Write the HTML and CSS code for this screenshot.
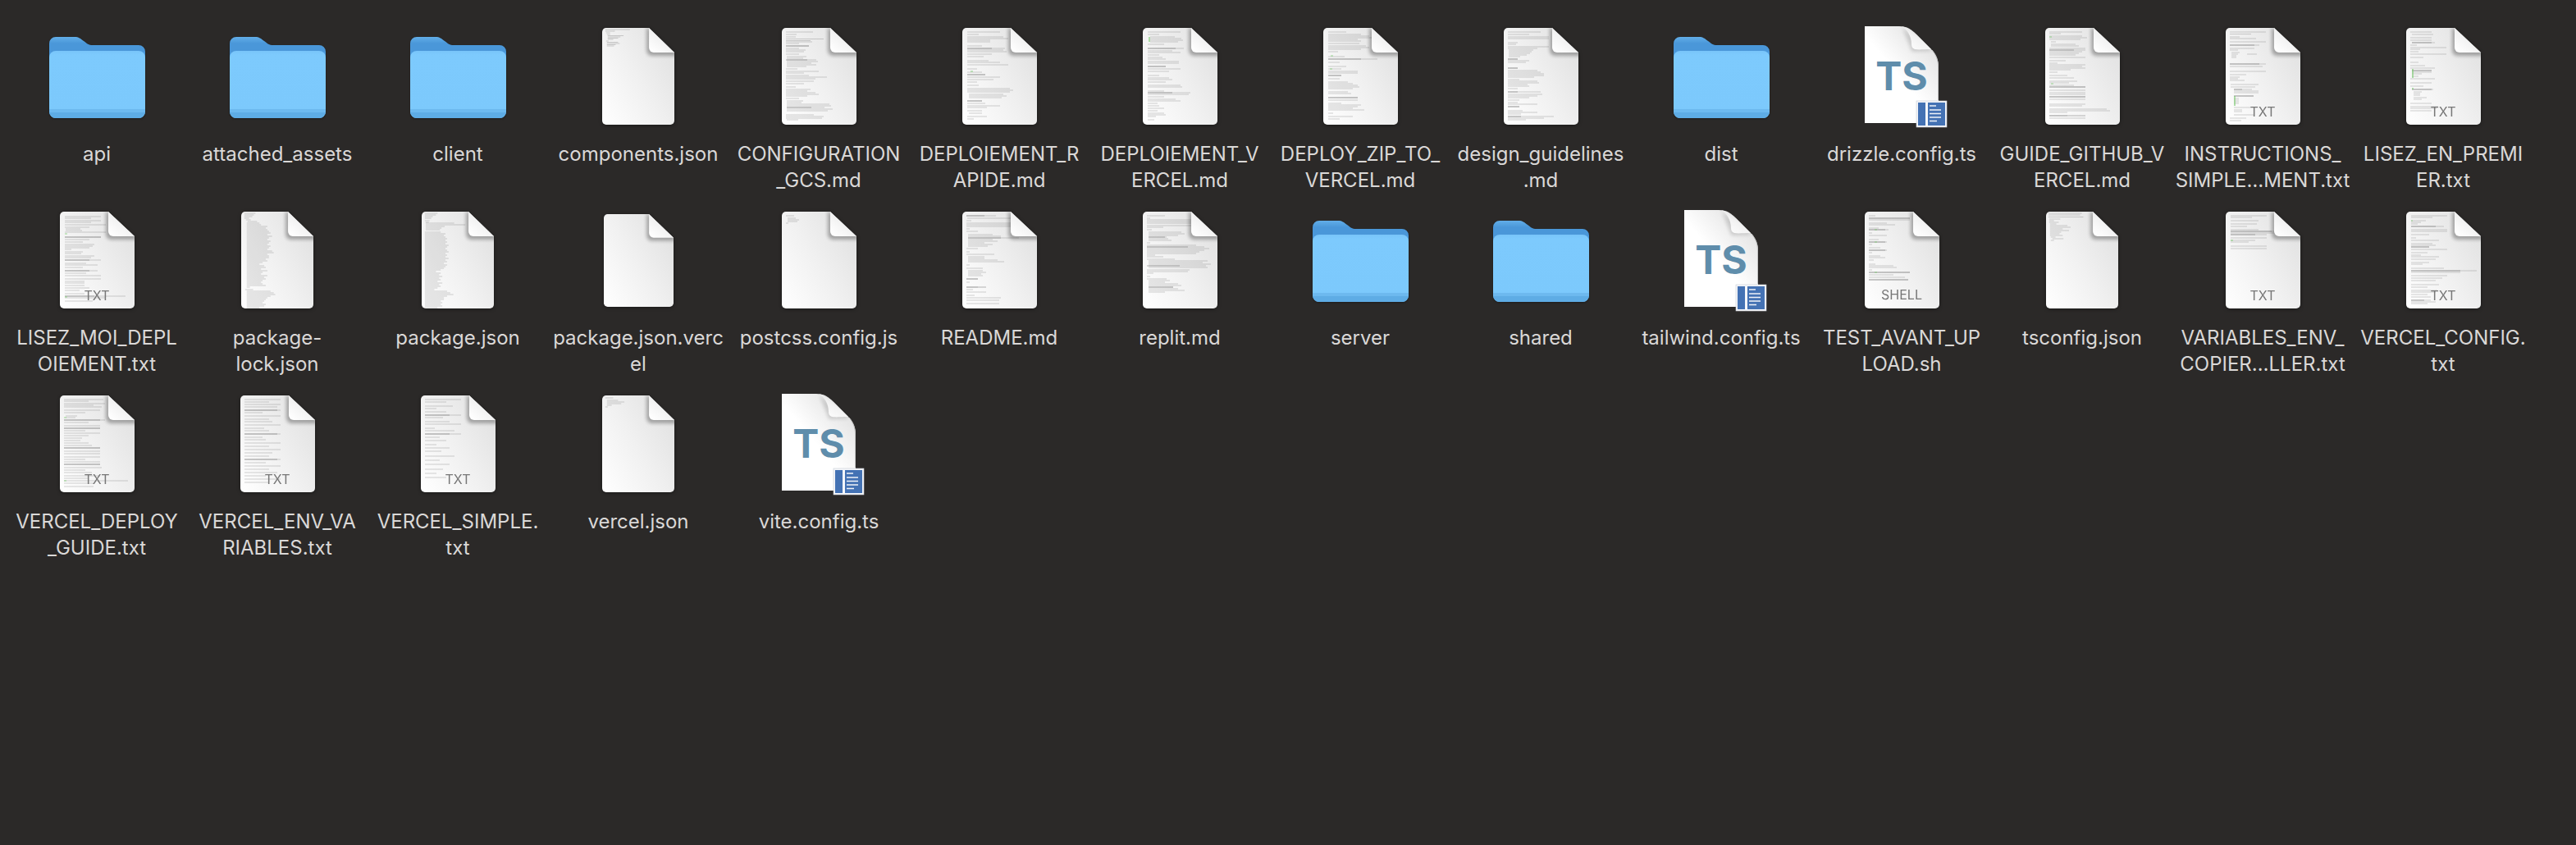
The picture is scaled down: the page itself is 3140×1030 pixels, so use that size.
FILE: index.html
```html
<!DOCTYPE html>
<html lang="en">
<head>
    <meta charset="UTF-8">
    <title>Project files</title>
    <link rel="stylesheet" href="styles.css">
</head>
<body>
    <!-- shared icon parts -->
    <svg class="sprite" aria-hidden="true">
        <defs>
            <linearGradient id="pageFill" x1="0" y1="1" x2="1" y2="0.25">
                <stop offset="0" stop-color="#ffffff"/>
                <stop offset="0.55" stop-color="#f0f0f0"/>
                <stop offset="1" stop-color="#e2e2e2"/>
            </linearGradient>
            <linearGradient id="foldFill" x1="0.1" y1="0.95" x2="0.75" y2="0.2">
                <stop offset="0" stop-color="#ffffff"/>
                <stop offset="0.6" stop-color="#f2f2f2"/>
                <stop offset="1" stop-color="#d4d4d4"/>
            </linearGradient>
            <linearGradient id="tsPage" x1="0.9" y1="0" x2="0.45" y2="0.5">
                <stop offset="0" stop-color="#dcdcdc"/>
                <stop offset="1" stop-color="#ffffff"/>
            </linearGradient>
            <linearGradient id="folderBack" x1="0" y1="0" x2="0" y2="1">
                <stop offset="0" stop-color="#62aee8"/>
                <stop offset="0.2" stop-color="#4a97d9"/>
            </linearGradient>
            <linearGradient id="folderFront" x1="0" y1="0" x2="0" y2="1">
                <stop offset="0" stop-color="#78c4f9"/>
                <stop offset="0.06" stop-color="#7dcafd"/>
                <stop offset="0.85" stop-color="#7cc9fc"/>
                <stop offset="1" stop-color="#70bdf2"/>
            </linearGradient>
            <filter id="soft" x="-30%" y="-30%" width="160%" height="160%">
                <feGaussianBlur stdDeviation="2.2"/>
            </filter>
            <clipPath id="pageClip">
                <path d="M5 0H59L91 30V113a5 5 0 0 1-5 5H5a5 5 0 0 1-5-5V5a5 5 0 0 1 5-5z"/>
            </clipPath>

            <path id="docBase" fill="url(#pageFill)" d="M5 0H59L91 30V113a5 5 0 0 1-5 5H5a5 5 0 0 1-5-5V5a5 5 0 0 1 5-5z"/>
            <g id="docFold">
                <g clip-path="url(#pageClip)">
                    <path d="M58 0L94 31V34H62a7 7 0 0 1-6-6V0z" fill="#000" opacity="0.3" filter="url(#soft)"/>
                </g>
                <path fill="url(#foldFill)" d="M59 0L91 30H65a6 6 0 0 1-6-6z"/>
            </g>

            <g id="folder">
                <path fill="url(#folderBack)" d="M0 8a8 8 0 0 1 8-8H31c5 0 7 2 11 5 4 3 6 5 11 5H109a8 8 0 0 1 8 8V40H0z"/>
                <path fill="url(#folderFront)" d="M0 25a8 8 0 0 1 8-8H109a8 8 0 0 1 8 8V91a8 8 0 0 1-8 8H8a8 8 0 0 1-8-8z"/>
                <path fill="#6db9ef" d="M0 88H117V92H0z"/>
                <path fill="#5eace5" d="M0 92H117V91a8 8 0 0 1-8 8H8a8 8 0 0 1-8-8z"/>
            </g>

            <g id="tsFile">
                <path fill="url(#tsPage)" d="M0 0H42C52 0 57 4 63 10L82 29C87 35 90 41 90 50V118H0z"/>
                <path fill="none" stroke="#c4c4c4" d="M82 29C87 35 89.500 41 89.500 50V90"/>
                <path fill="#000" opacity="0.14" filter="url(#soft)" d="M46 2L82 30L60 31a4 4 0 0 1-4-4z"/>
                <path fill="url(#foldFill)" d="M45 0C50 1 56 4 63 10L81 28C72 28 66 29 61 28 58 27 57 25 57 22 57 12 52 4 45 0z"/>
                <text class="ts-label" x="45" y="78">TS</text>
                <rect x="63" y="91" width="37" height="32" fill="#f4f6fa" stroke="#c8ccd4" stroke-width="0.6"/>
                <rect x="65" y="93" width="9" height="28" fill="#4472b4"/>
                <rect x="77" y="93" width="21" height="28" fill="#4472b4"/>
                <path stroke="#eef2f8" stroke-width="1.700" d="M79 97h8M79 102h14M79 106.500h14M79 111h14M79 115.500h9"/>
            </g>
        </defs>
    </svg>

    <main class="file-grid">
        <div class="item">
            <div class="icon"><svg class="folder" viewBox="0 0 117 99"><use href="#folder"/></svg></div>
            <p class="name">api</p>
        </div>
        <div class="item">
            <div class="icon"><svg class="folder" viewBox="0 0 117 99"><use href="#folder"/></svg></div>
            <p class="name">attached_assets</p>
        </div>
        <div class="item">
            <div class="icon"><svg class="folder" viewBox="0 0 117 99"><use href="#folder"/></svg></div>
            <p class="name">client</p>
        </div>
        <div class="item">
            <div class="icon"><svg class="doc doc-88" viewBox="0 0 91 118" preserveAspectRatio="none">
                <use href="#docBase"/>
                <path class="lines" d="M4 2h31M4 4h12M5 6h5M6 8h4M7 9.500h20M7 11h16M7 12.500h13M7 14h7M5 16h3M6 17.500h14M6 19h16M6 20.500h11M6 22h9"/>
                <use href="#docFold"/>
            </svg></div>
            <p class="name">components.json</p>
        </div>
        <div class="item">
            <div class="icon"><svg class="doc" viewBox="0 0 91 118">
                <use href="#docBase"/>
                <path class="lines" d="M5 5h33M5 8h13M5 11h12M5 13.500h46M5 15.500h30M5 17h32M5 19h16M5 22h28M5 25h16M5 27h24M5 29h22M5 32h16M6 35h24M6 37h20M6 39h36M6 41h38M6 43h30M6 45h36M6 47h24M5 50h14M5 53h40M5 55h22M5 58h28M5 60h50M5 62h36M5 65h34M5 68h22M5 72h12M5 75h30M5 77h26M5 79h36M5 81h40M5 83h26M5 86h16M6 89h20M6 91h18M6 93h52M6 95h54M6 97h46M6 99h56M6 101h50M5 106h34M5 108h46M5 110h44M6 112h14"/>
                <path class="lines-dark" d="M5 22h28M5 39h26M6 97h30"/>
                <use href="#docFold"/>
            </svg></div>
            <p class="name">CONFIGURATION<br>_GCS.md</p>
        </div>
        <div class="item">
            <div class="icon"><svg class="doc" viewBox="0 0 91 118">
                <use href="#docBase"/>
                <path class="lines" d="M6 5h40M6 8h14M6 11h44M6 13h50M6 15h28M6 17h28M6 22h18M6 25h46M6 27h44M6 29h48M6 32h30M6 35h20M6 40h26M6 42h40M6 45h50M6 50h12M6 54h18M6 57h22M6 60h40M6 63h32M6 66h12M6 70h14M6 74h52M6 76h56M6 78h52M8 81h42M8 83h46M8 85h40M6 89h18M6 92h22M6 95h40M6 97h24M6 101h18M8 104h16M6 108h24M6 111h8"/>
                <path class="lines-dark" d="M6 25h30M6 57h22M6 89h18"/>
                <path class="lines-green" d="M10 53h3"/>
                <use href="#docFold"/>
            </svg></div>
            <p class="name">DEPLOIEMENT_R<br>APIDE.md</p>
        </div>
        <div class="item">
            <div class="icon"><svg class="doc" viewBox="0 0 91 118">
                <use href="#docBase"/>
                <path class="lines" d="M6 5h40M6 8h14M9 11h30M9 13h38M9 15h40M9 17h34M6 20h20M6 25h44M6 28h30M6 30h40M6 33h14M6 36h18M6 38h22M6 41h38M6 43h38M6 47h22M6 50h40M6 53h26M6 58h14M6 61h26M6 63h30M6 66h22M6 70h40M6 72h42M6 77h20M6 79h52M6 81h50M6 84h20M6 87h34M6 89h40M6 92h12M6 95h14M6 98h20M6 101h12M6 104h20M6 106h22M6 108h10M6 112h8"/>
                <path class="lines-dark" d="M6 25h34M6 47h22M6 79h30"/>
                <path class="lines-green wide" d="M8 11v6"/>
                <use href="#docFold"/>
            </svg></div>
            <p class="name">DEPLOIEMENT_V<br>ERCEL.md</p>
        </div>
        <div class="item">
            <div class="icon"><svg class="doc" viewBox="0 0 91 118">
                <use href="#docBase"/>
                <path class="lines" d="M6 5h22M6 8h40M6 10h50M6 12h54M6 14h36M6 16h40M6 19h38M6 22h46M6 24h50M6 26h40M6 29h12M6 35h20M6 38h60M6 42h14M6 47h22M6 50h16M6 53h36M6 55h36M6 58h16M6 62h14M6 66h24M6 68h30M6 70h36M6 72h38M6 74h30M6 78h24M6 80h28M6 85h36M6 88h36M6 92h16M6 94h40M6 96h36M6 98h30M6 100h44M6 104h6M6 108h30M6 111h14"/>
                <path class="lines-dark" d="M6 38h40M6 58h16M6 85h36"/>
                <path class="lines-green" d="M9 34h3M8 50h3"/>
                <use href="#docFold"/>
            </svg></div>
            <p class="name">DEPLOY_ZIP_TO_<br>VERCEL.md</p>
        </div>
        <div class="item">
            <div class="icon"><svg class="doc" viewBox="0 0 91 118">
                <use href="#docBase"/>
                <path class="lines" d="M5 5h40M5 8h26M5 11h50M5 13h50M5 18h12M5 20h10M5 23h50M5 25h36M6 27h30M6 29h28M6 31h26M6 33h22M6 35h14M5 38h12M5 40h26M5 42h22M5 49h12M5 52h36M5 54h40M5 56h44M5 58h44M5 60h32M5 63h14M5 65h36M5 67h38M5 69h24M5 71h26M5 74h12M5 78h40M5 81h42M5 83h36M5 85h26M5 88h14M5 91h12M5 93h36M5 96h14M5 101h18M5 103h36M5 105h16M5 108h56M5 110h44M5 112h22"/>
                <path class="lines-dark" d="M5 38h12M5 49h12M5 78h12M5 96h14M5 108h16"/>
                <use href="#docFold"/>
            </svg></div>
            <p class="name">design_guidelines<br>.md</p>
        </div>
        <div class="item">
            <div class="icon"><svg class="folder" viewBox="0 0 117 99"><use href="#folder"/></svg></div>
            <p class="name">dist</p>
        </div>
        <div class="item">
            <div class="icon"><svg class="ts" viewBox="0 0 90 118"><use href="#tsFile"/></svg></div>
            <p class="name">drizzle.config.ts</p>
        </div>
        <div class="item">
            <div class="icon"><svg class="doc" viewBox="0 0 91 118">
                <use href="#docBase"/>
                <path class="lines" d="M5 5h40M5 7h14M5 10h40M5 12h46M5 14h38M7 17h6M7 20h30M7 22h34M5 25h44M5 27h44M5 29h40M5 31h36M5 33h32M5 36h44M5 40h20M5 43h10M5 45h44M5 47h40M5 49h44M5 51h26M5 54h10M5 58h22M5 61h30M5 65h34M5 67h24M5 70h30M5 72h44M5 76h44M5 79h44M5 81h44M5 84h44M5 87h44M5 93h44M5 95h40M5 99h70M5 101h74M5 103h22M5 107h22M5 110h44"/>
                <path class="lines-dark" d="M5 27h30M5 72h44M5 84h44M5 107h44"/>
                <path class="lines-green" d="M5 11h3M7 68h3"/>
                <use href="#docFold"/>
            </svg></div>
            <p class="name">GUIDE_GITHUB_V<br>ERCEL.md</p>
        </div>
        <div class="item">
            <div class="icon"><svg class="doc" viewBox="0 0 91 118">
                <use href="#docBase"/>
                <path class="lines" d="M5 5h44M5 7.500h26M5 11h12M5 13h32M5 17h44M5 21h36M5 25h30M5 27h10M7 30h10M7 32h8M7 34h6M7 36h6M26 32h12M5 44h44M5 47h40M5 53h44M5 57h20M5 60h12M5 62h10M5 64h18M6 69h34M6 72h30M10 75h22M10 77h30M10 79h30M10 83h24M10 86h6M10 88h6M10 90h6M10 92h6M10 97h20M10 100h10M10 102h10M10 106h24M5 110h20M5 113h14"/>
                <path class="lines-dark" d="M5 21h30M5 44h36M10 75h10M10 83h24"/>
                <path class="lines-green wide" d="M11 83v12"/>
                <text class="type" x="45" y="108">TXT</text>
                <use href="#docFold"/>
            </svg></div>
            <p class="name">INSTRUCTIONS_<br>SIMPLE…MENT.txt</p>
        </div>
        <div class="item">
            <div class="icon"><svg class="doc" viewBox="0 0 91 118">
                <use href="#docBase"/>
                <path class="lines" d="M5 5h26M7 8h26M5 12h26M5 15h26M7 18h28M5 21h8M5 24h44M5 26h12M5 29h10M5 32h44M5 36h16M5 42h10M5 46h18M5 49h30M7 52h24M7 54h24M7 56h12M7 59h8M5 62h30M5 67h26M5 71h16M7 75h26M9 78h10M9 80h8M9 82h8M9 85h16M9 87h10M5 92h26M5 96h34M5 98h32M5 101h26"/>
                <path class="lines-dark" d="M7 18h24M7 52h24M7 75h24"/>
                <path class="lines-green wide" d="M8 50v11M7 74h2"/>
                <text class="type" x="45" y="108">TXT</text>
                <use href="#docFold"/>
            </svg></div>
            <p class="name">LISEZ_EN_PREMI<br>ER.txt</p>
        </div>

        <div class="item">
            <div class="icon"><svg class="doc" viewBox="0 0 91 118">
                <use href="#docBase"/>
                <path class="lines" d="M6 6h44M6 8h32M6 11h44M6 13h32M6 16h50M6 19h30M7 21h18M7 23h20M6 25h50M6 31h44M6 34h30M6 37h22M6 40h36M6 42h34M6 44h30M6 46h8M6 49h22M6 51h20M6 54h36M6 56h32M6 59h44M6 63h26M6 65h40M6 68h22M6 72h40M6 75h26M6 78h44M6 82h44M6 85h24M6 87h24M6 90h24M6 93h30M6 96h18M6 100h24M6 103h74M6 105h50M6 109h34"/>
                <path class="lines-dark" d="M6 31h44M6 59h30M6 72h30M6 103h36"/>
                <path class="lines-green" d="M6 27h3M6 104h3"/>
                <text class="type" x="45" y="108">TXT</text>
                <use href="#docFold"/>
            </svg></div>
            <p class="name">LISEZ_MOI_DEPL<br>OIEMENT.txt</p>
        </div>
        <div class="item">
            <div class="icon"><svg class="doc doc-88" viewBox="0 0 91 118" preserveAspectRatio="none">
                <use href="#docBase"/>
                <path class="lines" d="M4 2h14M4 4h12M4 6h10M4 8h6M6 10h6M8 12h12M7 14h16M7 16h18M7 18h26M7 20h24M7 22h26M7 24h28M7 26h30M7 28h26M7 30h32M7 32h28M7 34h26M7 36h30M7 38h28M7 40h26M7 42h30M7 44h28M7 46h26M7 48h32M7 50h34M7 52h26M7 54h28M7 56h28M7 58h24M7 60h26M7 62h20M7 64h16M7 66h22M7 68h24M7 70h18M7 72h26M7 74h20M7 76h18M7 78h26M7 80h22M7 82h24M7 84h20M7 86h18M7 88h20M7 90h24M7 92h4M5 95h10M7 97h30M7 99h34M7 101h36M7 103h30M7 105h26M7 107h24M7 109h22M7 111h20M7 113h24M7 115h22M7 117h16"/>
                <use href="#docFold"/>
            </svg></div>
            <p class="name">package-<br>lock.json</p>
        </div>
        <div class="item">
            <div class="icon"><svg class="doc doc-88" viewBox="0 0 91 118" preserveAspectRatio="none">
                <use href="#docBase"/>
                <path class="lines" d="M4 2h16M4 4h14M4 6h10M4 8h8M4 11h6M5 13h4M5 14h36M5 16h50M5 18h24M5 20h20M5 22h18M4 25h20M4 27h26M4 29h24M4 31h26M4 33h28M4 35h26M4 37h28M4 39h26M4 41h30M4 43h28M4 45h26M4 47h28M4 49h30M4 51h26M4 53h28M4 55h26M4 57h30M4 59h26M4 61h28M4 63h24M4 65h28M4 67h26M4 69h24M4 71h20M4 73h14M4 75h20M4 77h18M4 79h22M4 81h18M4 83h20M4 85h16M4 87h22M4 89h18M4 91h20M4 93h16M4 95h12M4 97h28M4 99h32M4 101h36M4 103h28M4 105h24M4 107h24M4 109h20M4 111h22M4 113h20M4 115h22M4 117h16"/>
                <use href="#docFold"/>
            </svg></div>
            <p class="name">package.json</p>
        </div>
        <div class="item">
            <div class="icon"><svg class="doc doc-85" viewBox="0 0 91 118" preserveAspectRatio="none">
                <use href="#docBase"/>
                <use href="#docFold"/>
            </svg></div>
            <p class="name">package.json.verc<br>el</p>
        </div>
        <div class="item">
            <div class="icon"><svg class="doc" viewBox="0 0 91 118">
                <use href="#docBase"/>
                <path class="lines" d="M5 5h10M7 8h10M7 10h14M7 12h12M5 14h3"/>
                <use href="#docFold"/>
            </svg></div>
            <p class="name">postcss.config.js</p>
        </div>
        <div class="item">
            <div class="icon"><svg class="doc" viewBox="0 0 91 118">
                <use href="#docBase"/>
                <path class="lines" d="M5 5h36M6 8h54M5 11h6M5 14h54M5 16h60M5 18h54M5 21h4M5 24h14M7 28h30M7 30h40M7 32h62M7 34h30M7 36h36M7 38h20M7 40h30M7 42h24M5 45h14M5 49h4M5 52h34M7 55h20M7 57h20M7 59h36M7 61h44M5 65h4M5 69h20M7 72h18M7 74h22M7 76h16M7 78h18M5 82h14M5 86h4M5 92h14M5 95h8M5 98h24M5 102h10M5 105h42M5 108h40M5 112h40"/>
                <path class="lines-dark" d="M5 5h22M7 32h40M5 82h14M5 92h24"/>
                <use href="#docFold"/>
            </svg></div>
            <p class="name">README.md</p>
        </div>
        <div class="item">
            <div class="icon"><svg class="doc" viewBox="0 0 91 118">
                <use href="#docBase"/>
                <path class="lines" d="M5 5h22M5 8h4M5 10h56M5 12h58M5 14h56M5 17h56M5 19h20M5 22h6M7 25h40M7 27h44M7 29h36M7 31h22M7 33h24M7 35h28M5 38h4M5 41h60M5 43h70M5 45h76M5 47h70M5 49h64M5 51h60M5 53h10M5 55h20M5 58h34M7 60h72M7 62h66M7 64h76M7 66h70M7 68h72M5 71h52M5 73h50M5 75h8M5 79h4M5 82h24M7 84h26M7 86h20M7 88h36M7 90h40M7 92h30M7 94h36M7 96h44M7 98h20"/>
                <path class="lines-dark" d="M7 31h20M5 43h50M5 66h40M7 92h30"/>
                <use href="#docFold"/>
            </svg></div>
            <p class="name">replit.md</p>
        </div>
        <div class="item">
            <div class="icon"><svg class="folder" viewBox="0 0 117 99"><use href="#folder"/></svg></div>
            <p class="name">server</p>
        </div>
        <div class="item">
            <div class="icon"><svg class="folder" viewBox="0 0 117 99"><use href="#folder"/></svg></div>
            <p class="name">shared</p>
        </div>
        <div class="item">
            <div class="icon"><svg class="ts" viewBox="0 0 90 118"><use href="#tsFile"/></svg></div>
            <p class="name">tailwind.config.ts</p>
        </div>
        <div class="item">
            <div class="icon"><svg class="doc" viewBox="0 0 91 118">
                <use href="#docBase"/>
                <path class="lines" d="M5 5h8M5 8h50M5 10h50M5 14h22M5 16h32M5 20h12M5 22h24M5 26h4M5 29h22M5 34h12M5 37h22M5 40h4M5 44h14M5 47h22M5 50h4M5 54h14M5 56h20M5 59h6M5 64h8M5 66h30M5 68h34M5 71h4M5 74h50M5 77h30M5 80h44M5 83h48"/>
                <path class="lines-dark" d="M5 8h50M5 22h20M5 37h20M5 47h20M5 74h50M5 83h48"/>
                <path class="lines-green" d="M12 22h3M12 37h3M12 74h3"/>
                <text class="type" x="45" y="107">SHELL</text>
                <use href="#docFold"/>
            </svg></div>
            <p class="name">TEST_AVANT_UP<br>LOAD.sh</p>
        </div>
        <div class="item">
            <div class="icon"><svg class="doc doc-88" viewBox="0 0 91 118" preserveAspectRatio="none">
                <use href="#docBase"/>
                <path class="lines" d="M3 2h42M3 4h40M3 6.500h44M4 9h14M4 11h6M4 13h12M5 15h8M5 17h22M5 19h26M5 21h16M5 23h24M5 25h14M5 27h12M5 29h16M6 31h6M8 33h14M6 35h4"/>
                <use href="#docFold"/>
            </svg></div>
            <p class="name">tsconfig.json</p>
        </div>
        <div class="item">
            <div class="icon"><svg class="doc" viewBox="0 0 91 118">
                <use href="#docBase"/>
                <path class="lines" d="M6 5h44M6 7h26M6 11h34M6 15h32M6 18h20M6 22h34M6 24h56M6 26h56M6 28h44M6 32h44M6 35h30M6 37h22M6 42h44M6 45h44"/>
                <path class="lines-dark" d="M6 24h50M6 28h30"/>
                <path class="lines-green" d="M6 35h3"/>
                <text class="type" x="45" y="108">TXT</text>
                <use href="#docFold"/>
            </svg></div>
            <p class="name">VARIABLES_ENV_<br>COPIER…LLER.txt</p>
        </div>
        <div class="item">
            <div class="icon"><svg class="doc" viewBox="0 0 91 118">
                <use href="#docBase"/>
                <path class="lines" d="M6 5h44M6 7h26M6 11h18M6 13h12M6 15h8M6 18h40M6 22h44M6 24h44M6 28h22M6 32h6M6 35h34M6 39h26M6 41h30M6 43h22M6 46h44M6 50h20M6 53h12M6 55h34M6 58h30M6 62h22M6 64h14M6 69h40M6 72h80M6 74h60M6 78h44M6 81h38M6 84h30M6 89h34M6 92h20M6 96h32M6 98h30M6 101h20M6 104h24M6 108h24M6 110h30M6 112h20"/>
                <path class="lines-dark" d="M6 18h30M6 43h22M6 72h60M6 108h16"/>
                <path class="lines-green" d="M6 11h2"/>
                <text class="type" x="45" y="108">TXT</text>
                <use href="#docFold"/>
            </svg></div>
            <p class="name">VERCEL_CONFIG.<br>txt</p>
        </div>

        <div class="item">
            <div class="icon"><svg class="doc" viewBox="0 0 91 118">
                <use href="#docBase"/>
                <path class="lines" d="M5 5h48M5 7h30M5 10h50M5 12h36M5 14h46M5 18h44M5 21h26M7 25h14M7 27h12M5 30h50M5 33h30M5 37h44M5 40h44M5 43h26M5 46h44M5 49h30M5 52h22M5 55h20M5 58h30M5 61h34M5 64h44M5 68h44M5 71h44M5 75h44M5 78h26M5 81h44M5 84h44M5 88h46M5 91h26M5 94h34M5 98h44M5 101h30M5 104h78M5 107h36M5 111h36"/>
                <path class="lines-dark" d="M5 30h44M5 40h44M5 64h44M5 84h44"/>
                <path class="lines-green" d="M5 27h3M5 104h3"/>
                <text class="type" x="45" y="108">TXT</text>
                <use href="#docFold"/>
            </svg></div>
            <p class="name">VERCEL_DEPLOY<br>_GUIDE.txt</p>
        </div>
        <div class="item">
            <div class="icon"><svg class="doc" viewBox="0 0 91 118">
                <use href="#docBase"/>
                <path class="lines" d="M5 5h44M5 8h30M5 11h44M5 14h40M5 18h44M5 21h22M5 25h44M5 29h30M5 32h34M5 36h44M5 40h24M5 43h30M5 47h44M5 51h22M5 54h26M5 58h44M5 62h30M5 66h44M5 70h34M5 74h30M5 78h44M5 82h26M5 86h44M5 90h30M5 94h40M5 98h26M5 102h44M5 106h30"/>
                <path class="lines-dark" d="M5 18h40M5 47h40M5 78h40"/>
                <text class="type" x="45" y="108">TXT</text>
                <use href="#docFold"/>
            </svg></div>
            <p class="name">VERCEL_ENV_VA<br>RIABLES.txt</p>
        </div>
        <div class="item">
            <div class="icon"><svg class="doc" viewBox="0 0 91 118">
                <use href="#docBase"/>
                <path class="lines" d="M5 5h44M5 8h26M5 13h34M5 16h14M5 20h26M5 24h44M5 27h22M5 32h30M5 35h44M5 40h12M5 43h36M5 47h44M5 51h18M5 55h26M5 60h14M5 64h30M5 68h20M5 74h36M5 79h18M5 84h30M5 90h22M5 95h14M5 100h26"/>
                <path class="lines-dark" d="M5 24h30M5 47h30"/>
                <text class="type" x="45" y="108">TXT</text>
                <use href="#docFold"/>
            </svg></div>
            <p class="name">VERCEL_SIMPLE.<br>txt</p>
        </div>
        <div class="item">
            <div class="icon"><svg class="doc doc-88" viewBox="0 0 91 118" preserveAspectRatio="none">
                <use href="#docBase"/>
                <path class="lines" d="M4 3h10M6 6h14M6 8h22M6 10h18M6 12h6M4 14h3"/>
                <use href="#docFold"/>
            </svg></div>
            <p class="name">vercel.json</p>
        </div>
        <div class="item">
            <div class="icon"><svg class="ts" viewBox="0 0 90 118"><use href="#tsFile"/></svg></div>
            <p class="name">vite.config.ts</p>
        </div>
    </main>
</body>
</html>
```

FILE: styles.css
```css
body {
    margin: 0;
    background-color: #2b2928;
    color: #dad8d7;
    font-family: Inter, "Noto Sans", sans-serif;
    font-size: 24px;
}
.sprite {
    position: absolute;
    width: 0;
    height: 0;
}
.file-grid {
    display: grid;
    grid-template-columns: repeat(14, 220px);
    grid-auto-rows: 224px;
    padding: 28px 0 0 8px;
}
.item {
    display: flex;
    flex-direction: column;
    align-items: center;
}
.icon {
    height: 130px;
    display: flex;
    align-items: center;
    justify-content: center;
}
.name {
    margin: 14px 0 0;
    line-height: 32px;
    text-align: center;
    white-space: nowrap;
}
svg {
    display: block;
    overflow: visible;
}
.folder {
    width: 117px;
    height: 99px;
    margin-top: 3px;
    filter: drop-shadow(0 1px 1px rgba(0, 0, 0, 0.3));
}
.doc {
    width: 91px;
    height: 118px;
    filter: drop-shadow(0 1px 2px rgba(0, 0, 0, 0.4));
}
.doc-88 {
    width: 88px;
}
.doc-85 {
    width: 85px;
    height: 113px;
}
.ts {
    width: 90px;
    height: 118px;
    margin-top: -4px;
}
.lines {
    fill: none;
    stroke: #7a7a7a;
    stroke-width: 0.7;
    stroke-opacity: 0.5;
}
.lines-dark {
    fill: none;
    stroke: #555;
    stroke-width: 0.7;
    stroke-opacity: 0.6;
}
.lines-green {
    fill: none;
    stroke: #74c968;
    stroke-width: 1.2;
    stroke-opacity: 0.7;
}
.lines-green.wide {
    stroke-width: 1.6;
}
.type {
    font-family: Inter, sans-serif;
    font-size: 16px;
    fill: #777;
    text-anchor: middle;
}
.ts-label {
    font-family: Inter, sans-serif;
    font-size: 48px;
    font-weight: 700;
    fill: #5f8dab;
    text-anchor: middle;
}
```
